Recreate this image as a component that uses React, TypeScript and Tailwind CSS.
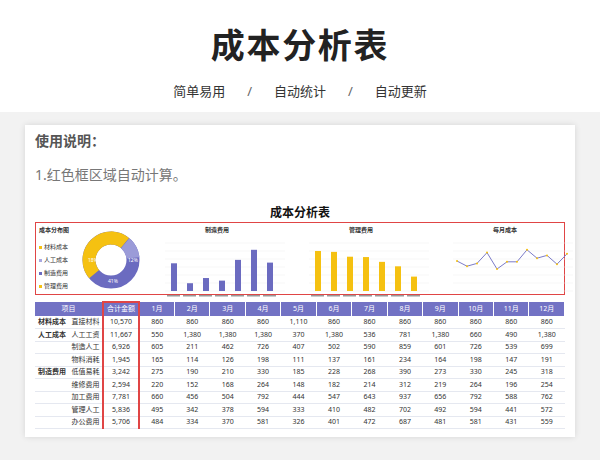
const months = ["1月","2月","3月","4月","5月","6月","7月","8月","9月","10月","11月","12月"];
const rows: [string, string, string, string[]][] = [
  ["材料成本","直接材料","10,570",["860","860","860","860","1,110","860","860","860","860","860","860","860"]],
  ["人工成本","人工工资","11,667",["550","1,380","1,380","1,380","370","1,380","536","781","1,380","660","490","1,380"]],
  ["","制造人工","6,926",["605","211","462","726","407","502","590","859","601","726","539","699"]],
  ["","物料消耗","1,945",["165","114","126","198","111","137","161","234","164","198","147","191"]],
  ["制造费用","低值易耗","3,242",["275","190","210","330","185","228","268","390","273","330","245","318"]],
  ["","维修费用","2,594",["220","152","168","264","148","182","214","312","219","264","196","254"]],
  ["","加工费用","7,781",["660","456","504","792","444","547","643","937","656","792","588","762"]],
  ["","管理人工","5,836",["495","342","378","594","333","410","482","702","492","594","441","572"]],
  ["","办公费用","5,706",["484","334","370","581","326","401","472","687","481","581","431","559"]],
];

function Bars({ vals, color, max }: { vals: number[]; color: string; max: number }) {
  return (
    <svg width="140" height="64" viewBox="0 0 140 64">
      {[0, 1, 2, 3, 4, 5, 6].map((i) => (
        <line key={i} x1="18" x2="138" y1={56 - i * 8} y2={56 - i * 8} stroke="#eee" strokeWidth="0.5" />
      ))}
      {vals.map((v, i) => {
        const h = (v / max) * 48;
        return <rect key={i} x={24 + i * 16} y={56 - h} width="6" height={h} fill={color} />;
      })}
      {vals.map((_, i) => (
        <rect key={"l" + i} x={20 + i * 16} y="60" width="13" height="1.5" fill="#999" />
      ))}
    </svg>
  );
}

export default function App() {
  const line = [7500, 6200, 6900, 9600, 5500, 7300, 7300, 10300, 8200, 8900, 6700, 9300];
  const pts = line.map((v, i) => `${22 + i * 10},${56 - (v / 12000) * 48}`).join(" ");
  return (
    <div className="w-[600px] h-[460px] bg-[#f2f2f2] overflow-hidden" style={{ fontFamily: '"Noto Sans", "Noto Sans CJK SC", sans-serif' }}>
      <div className="bg-white h-[112px] flex flex-col items-center">
        <h1 className="mt-[22px] text-[34px] font-bold text-[#222] leading-[46px] tracking-wider">成本分析表</h1>
        <div className="mt-[14px] flex gap-[22px] text-[13px] text-[#333]">
          <span>简单易用</span><span className="text-[#666]">/</span><span>自动统计</span><span className="text-[#666]">/</span><span>自动更新</span>
        </div>
      </div>
      <div className="mx-[25px] mt-[13px] bg-white shadow-[0_0_6px_rgba(0,0,0,0.12)] h-[312px] px-[10px] pt-[5px]">
        <div className="text-[14px] font-bold text-[#555]">使用说明：</div>
        <div className="mt-[13px] text-[14px] text-[#777]">1.红色框区域自动计算。</div>
        <div className="mt-[20px] text-center text-[12px] font-bold text-[#111] leading-[16px]">成本分析表</div>
        <div className="mt-[1px] border border-[#e04545] h-[73px] flex items-start px-[3px] pt-[3px] gap-[4px]">
          <div className="w-[104px] flex">
            <div className="text-[6px] text-[#333] w-[40px]">
              <div className="font-bold mb-[8px]">成本分布图</div>
              {[["#f5c111","材料成本"],["#a8a8e0","人工成本"],["#6b6bc0","制造费用"],["#f5c111","管理费用"]].map(([c, t]) => (
                <div key={t} className="flex items-center gap-[2px] mb-[4px]"><span className="w-[3px] h-[3px]" style={{ background: c }} />{t}</div>
              ))}
            </div>
            <svg width="64" height="66" viewBox="0 0 64 66">
              <circle cx="32" cy="34" r="22" fill="none" stroke="#6b6bc0" strokeWidth="13" />
              <circle cx="32" cy="34" r="22" fill="none" stroke="#f5c111" strokeWidth="13" strokeDasharray="52 140" transform="rotate(140 32 34)" />
              <circle cx="32" cy="34" r="22" fill="none" stroke="#f5c111" strokeWidth="13" strokeDasharray="15 140" transform="rotate(-90 32 34)" />
              <circle cx="32" cy="34" r="22" fill="none" stroke="#9b9bd8" strokeWidth="13" strokeDasharray="17 140" transform="rotate(-50 32 34)" />
              <text x="9" y="36" fontSize="5" fill="#fff">18%</text>
              <text x="49" y="36" fontSize="5" fill="#fff">12%</text>
              <text x="29" y="57" fontSize="5" fill="#fff">41%</text>
            </svg>
          </div>
          {[["制造费用", <Bars key="a" vals={[6926, 1945, 3242, 2594, 7781, 10300, 7100]} color="#6b6bc0" max={12000} />],
            ["管理费用", <Bars key="b" vals={[5836, 5706, 5000, 4950, 4250, 3600, 2100]} color="#f5c111" max={7000} />]].map(([t, c]) => (
            <div key={t as string} className="flex-1 flex flex-col items-center">
              <div className="text-[6px] font-bold text-[#333]">{t}</div>
              {c}
            </div>
          ))}
          <div className="flex-1 flex flex-col items-center">
            <div className="text-[6px] font-bold text-[#333]">每月成本</div>
            <svg width="140" height="64" viewBox="0 0 140 64">
              {[0, 1, 2, 3, 4, 5, 6].map((i) => (
                <line key={i} x1="18" x2="138" y1={56 - i * 8} y2={56 - i * 8} stroke="#eee" strokeWidth="0.5" />
              ))}
              <polyline points={pts} fill="none" stroke="#7b7bc8" strokeWidth="1" />
              {line.map((v, i) => <circle key={i} cx={22 + i * 10} cy={56 - (v / 12000) * 48} r="1" fill="#f5c111" />)}
            </svg>
          </div>
        </div>
        <table className="mt-[6px] w-full border-collapse text-[7px] text-[#333] table-fixed">
          <colgroup>
            <col className="w-[34px]" /><col className="w-[34px]" /><col className="w-[36px]" />
          </colgroup>
          <thead>
            <tr className="bg-[#7272c4] text-white h-[14px]">
              <th colSpan={2} className="font-normal border-r border-white">项目</th>
              <th className="font-normal border-x-2 border-t-2 border-[#e04545]">合计金额</th>
              {months.map((m) => <th key={m} className="font-normal border-r border-white">{m}</th>)}
            </tr>
          </thead>
          <tbody>
            {rows.map(([a, b, s, vals], i) => (
              <tr key={i} className="h-[12.5px] border-b border-[#e5e8f0]">
                <td className="text-center font-bold">{a}</td>
                <td className="text-center">{b}</td>
                <td className="text-center border-x-2 border-[#e04545]">{s}</td>
                {vals.map((v, j) => <td key={j} className="text-center">{v}</td>)}
              </tr>
            ))}
          </tbody>
        </table>
      </div>
    </div>
  );
}
